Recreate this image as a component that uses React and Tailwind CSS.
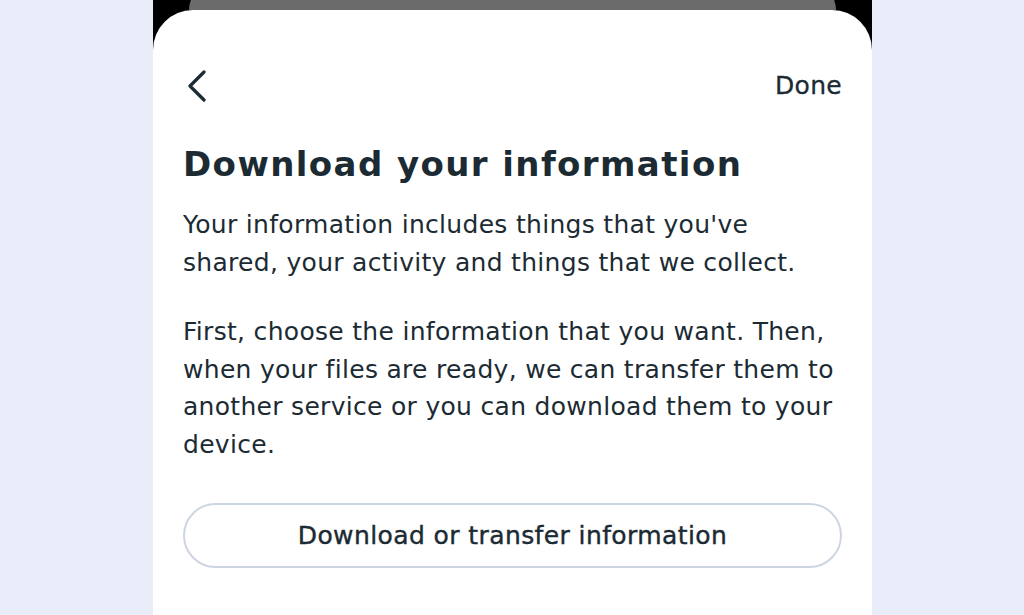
export default function App() {
  return (
    <div className="flex h-[615px] w-[1024px] justify-center overflow-hidden bg-[#e9edf9] pl-[1px]" style={{ fontFamily: '"DejaVu Sans", "Noto Sans", sans-serif' }}>
      <div className="flex h-full w-[719px] flex-col bg-black">
        <div className="mx-[36px] -mt-[18px] h-[28px] shrink-0 rounded-t-[40px] bg-[#6b6b6b]" />
        <div className="flex flex-1 flex-col rounded-t-[40px] bg-white px-[30px] text-[#1c2b33]">
          <div className="mt-[60px] flex h-[32px] items-center justify-between">
            <button className="ml-[4px] flex h-[32px] w-[24px] items-center">
              <svg width="20" height="32" viewBox="0 0 20 32" fill="none">
                <path d="M17 2 L3 16 L17 30" stroke="#1c2b33" strokeWidth="3.2" strokeLinecap="round" strokeLinejoin="round" />
              </svg>
            </button>
            <button className="-mt-[2px] text-[25px] leading-none tracking-[0.3px] [-webkit-text-stroke:0.3px]">Done</button>
          </div>
          <h1 className="mt-[40px] text-[34px] font-bold leading-[44px] tracking-[1.4px]">Download your information</h1>
          <p className="mt-[20px] text-[25px] leading-[37.5px] tracking-[0.3px]">
            Your information includes things that you've shared, your activity and things that we collect.
          </p>
          <p className="mt-[32px] text-[25px] leading-[37.5px] tracking-[0.3px]">
            First, choose the information that you want. Then, when your files are ready, we can transfer them to another service or you can download them to your device.
          </p>
          <button className="mt-[40px] flex h-[65px] w-full items-center justify-center rounded-full border-2 border-[#ced5e2] text-[25px] tracking-[0.4px] [-webkit-text-stroke:0.4px]">
            Download or transfer information
          </button>
        </div>
      </div>
    </div>
  );
}
